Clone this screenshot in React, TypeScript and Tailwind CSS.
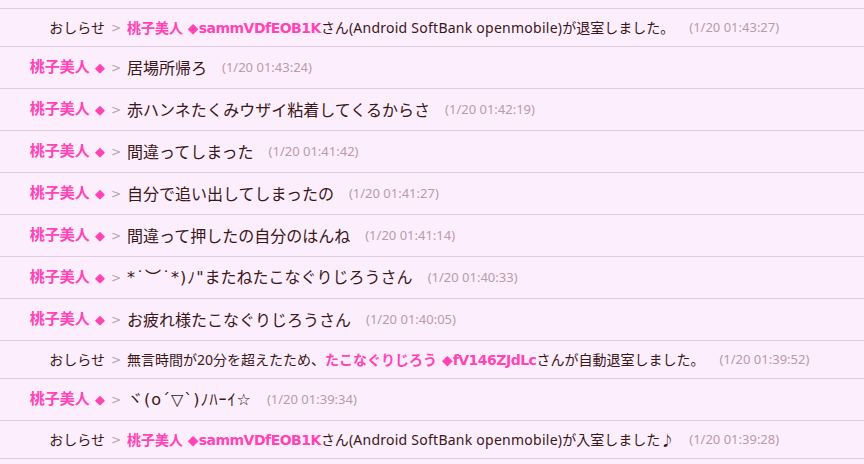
type Part = { t: string; pink?: boolean; id?: boolean; kao?: boolean; wide?: boolean };
type Row =
  | { kind: "msg"; parts: Part[]; time: string }
  | { kind: "notice"; parts: Part[]; time: string };

const rows: Row[] = [
  {
    kind: "notice",
    parts: [
      { t: "桃子美人 ◆", pink: true },
      { t: "sammVDfEOB1K", pink: true, id: true },
      { t: "さん" },
      { t: "(Android SoftBank openmobile)", wide: true },
      { t: "が退室しました。" },
    ],
    time: "(1/20 01:43:27)",
  },
  { kind: "msg", parts: [{ t: "居場所帰ろ" }], time: "(1/20 01:43:24)" },
  { kind: "msg", parts: [{ t: "赤ハンネたくみウザイ粘着してくるからさ" }], time: "(1/20 01:42:19)" },
  { kind: "msg", parts: [{ t: "間違ってしまった" }], time: "(1/20 01:41:42)" },
  { kind: "msg", parts: [{ t: "自分で追い出してしまったの" }], time: "(1/20 01:41:27)" },
  { kind: "msg", parts: [{ t: "間違って押したの自分のはんね" }], time: "(1/20 01:41:14)" },
  {
    kind: "msg",
    parts: [{ t: "*˙︶˙*)ﾉ\"", kao: true }, { t: "またねたこなぐりじろうさん" }],
    time: "(1/20 01:40:33)",
  },
  { kind: "msg", parts: [{ t: "お疲れ様たこなぐりじろうさん" }], time: "(1/20 01:40:05)" },
  {
    kind: "notice",
    parts: [
      { t: "無言時間が20分を超えたため、" },
      { t: "たこなぐりじろう ◆", pink: true },
      { t: "fV146ZJdLc", pink: true, id: true },
      { t: "さんが自動退室しました。" },
    ],
    time: "(1/20 01:39:52)",
  },
  { kind: "msg", parts: [{ t: "ヾ(o´▽`)ﾉﾊｰｲ☆", kao: true }], time: "(1/20 01:39:34)" },
  {
    kind: "notice",
    parts: [
      { t: "桃子美人 ◆", pink: true },
      { t: "sammVDfEOB1K", pink: true, id: true },
      { t: "さん" },
      { t: "(Android SoftBank openmobile)", wide: true },
      { t: "が入室しました♪" },
    ],
    time: "(1/20 01:39:28)",
  },
];

const base = { fontFamily: '"Noto Sans", "Noto Sans CJK JP", sans-serif' };
const verdana = { fontFamily: '"DejaVu Sans", "Noto Sans CJK JP", sans-serif' };

function Text({ parts }: { parts: Part[] }) {
  return (
    <>
      {parts.map((p, j) => (
        <span
          key={j}
          style={p.pink || p.kao ? verdana : undefined}
          className={
            (p.pink ? "font-bold text-[#ff44b4] " : "") +
            (p.id ? "tracking-[-0.5px] " : "") +
            (p.wide ? "tracking-[0.25px] " : "") +
            (p.kao ? "tracking-[1px]" : "")
          }
        >
          {p.t}
        </span>
      ))}
    </>
  );
}

export default function App() {
  return (
    <div
      className="w-[864px] h-[464px] overflow-hidden bg-[#fdeefd] text-[#3a1818]"
      style={base}
    >
      <div className="h-[9px] border-b border-[#dccbdc]" />
      {rows.map((r, i) => {
        const msg = r.kind === "msg";
        return (
          <div
            key={i}
            className={
              msg
                ? "h-[42px] border-b border-[#dccbdc] flex items-center"
                : "h-[38px] border-b border-[#dccbdc] flex items-center"
            }
          >
            {msg ? (
              <div
                className="w-[105px] text-right text-[15px] font-bold text-[#ff44b4] whitespace-nowrap"
                style={verdana}
              >
                桃子美人 <span className="text-[13px]">◆</span>
              </div>
            ) : (
              <div className="w-[105px] text-right text-[14px] whitespace-nowrap">
                おしらせ
              </div>
            )}
            <span className="ml-[6px] w-[16px] text-[12px] text-[#b8a4b0]" style={verdana}>
              &gt;
            </span>
            <span className={msg ? "text-[16px] whitespace-nowrap" : "text-[14px] whitespace-nowrap"}>
              <Text parts={r.parts} />
            </span>
            <span className="ml-[15px] text-[13px] text-[#b89ca8] whitespace-nowrap">
              {r.time}
            </span>
          </div>
        );
      })}
    </div>
  );
}
